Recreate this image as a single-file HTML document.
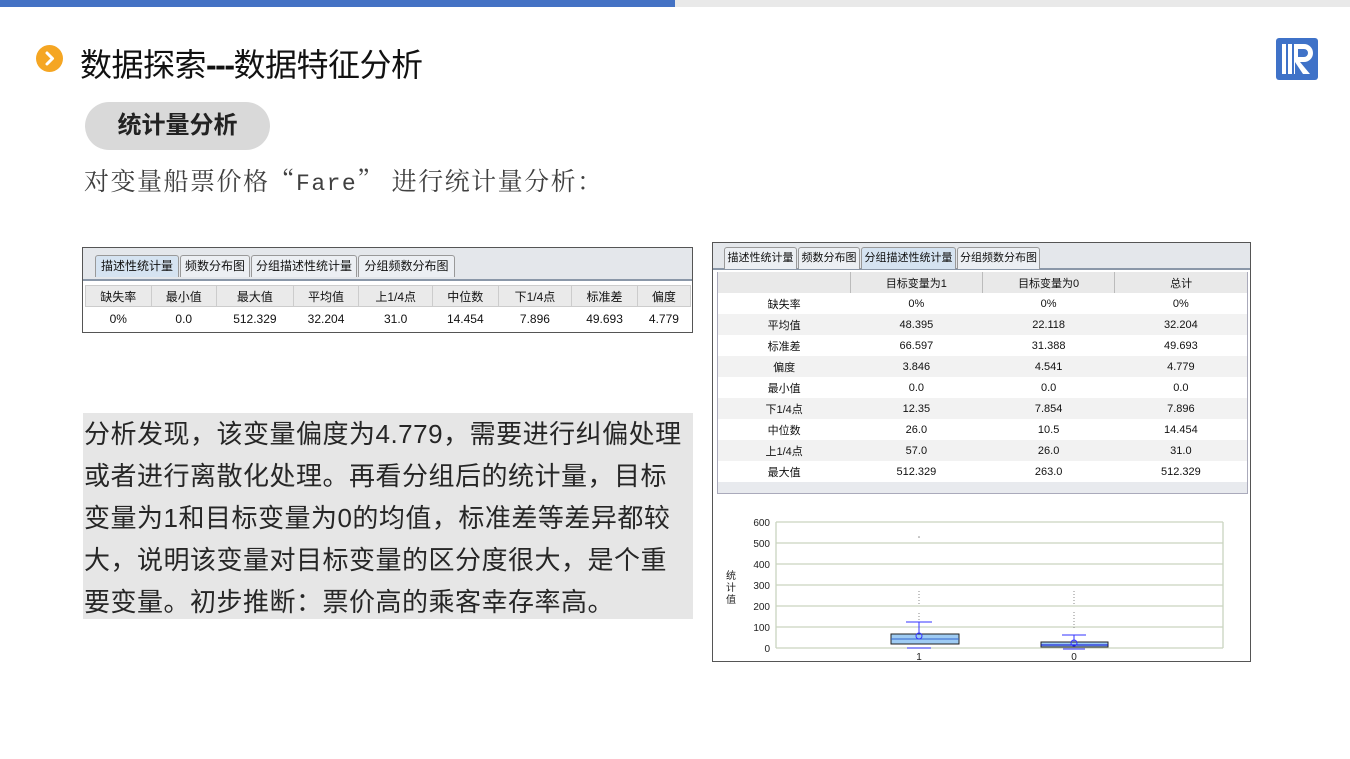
<!DOCTYPE html>
<html><head><meta charset="utf-8"><style>
*{margin:0;padding:0;box-sizing:border-box}
body{width:1350px;height:759px;background:#fff;position:relative;overflow:hidden;font-family:"Liberation Sans","Noto Sans CJK SC",sans-serif}
.abs{position:absolute}
table{border-collapse:collapse}
.t1 td{font-size:12px;text-align:center;color:#111}
.t2{table-layout:fixed}
.t2 td{font-size:11px;text-align:center;color:#111;height:21px}
.tab{position:absolute;top:0;height:22px;border:1px solid #999;border-bottom:none;border-radius:3px 3px 0 0;background:#eceff3;font-size:12px;line-height:20px;text-align:center;color:#111}
</style></head><body>
<div class="abs" style="left:0;top:0;width:675px;height:7px;background:#4472c4"></div>
<div class="abs" style="left:675px;top:0;width:675px;height:7px;background:#e9e9e9"></div>
<div class="abs" style="left:36px;top:45px;width:27px;height:27px;border-radius:50%;background:#f5a623"></div>
<svg class="abs" style="left:36px;top:45px" width="27" height="27"><path d="M11 8 L16.5 13.5 L11 19" stroke="#fff" stroke-width="3" fill="none" stroke-linecap="round" stroke-linejoin="round"/></svg>
<div class="abs" style="left:80px;top:40px;font-size:32px;color:#111;letter-spacing:-0.5px;white-space:nowrap">数据探索<span style="letter-spacing:-1.5px;font-weight:bold">---</span>数据特征分析</div>
<svg class="abs" style="left:1276px;top:38px" width="42" height="42"><rect width="42" height="42" rx="3" fill="#3f72c8"/><rect x="6" y="6" width="4" height="30" fill="#fff"/><rect x="12" y="6" width="4" height="30" fill="#fff"/><path d="M18 6 H28 A9 9 0 0 1 28 24 H24 L34 36 H27 L19 24 V36 H18 Z M22 11 V19 H28 A4 4 0 0 0 28 11 Z" fill="#fff"/></svg>
<div class="abs" style="left:85px;top:102px;width:185px;height:48px;border-radius:24px;background:#d9d9d9;font-size:24px;font-weight:bold;line-height:48px;text-align:center;color:#222">统计量分析</div>
<div class="abs" style="left:84px;top:162px;font-size:25px;color:#404040;font-family:'Noto Serif CJK SC',serif;white-space:nowrap;letter-spacing:1.5px">对变量船票价格“<span style="font-family:'Liberation Mono',monospace;font-size:23px">Fare</span>” 进行统计量分析：</div>

<div class="abs" style="left:82px;top:247px;width:611px;height:86px;border:1px solid #555;background:#fff">
 <div class="abs" style="left:0;top:0;width:609px;height:33px;background:#e4e7eb;border-bottom:2px solid #8a97a8"></div>
 <div class="tab" style="left:12px;top:7px;width:84px;background:#d5e3f1">描述性统计量</div>
 <div class="tab" style="left:97px;top:7px;width:70px">频数分布图</div>
 <div class="tab" style="left:168px;top:7px;width:106px">分组描述性统计量</div>
 <div class="tab" style="left:275px;top:7px;width:97px">分组频数分布图</div>
 <table class="t1 abs" style="left:2px;top:37px;width:606px">
 <tr style="height:21px;background:#eaeaea">
 <td style="border:1px solid #ccc">缺失率</td><td style="border:1px solid #ccc">最小值</td><td style="border:1px solid #ccc">最大值</td><td style="border:1px solid #ccc">平均值</td><td style="border:1px solid #ccc">上1/4点</td><td style="border:1px solid #ccc">中位数</td><td style="border:1px solid #ccc">下1/4点</td><td style="border:1px solid #ccc">标准差</td><td style="border:1px solid #ccc">偏度</td></tr>
 <tr style="height:24px"><td>0%</td><td>0.0</td><td>512.329</td><td>32.204</td><td>31.0</td><td>14.454</td><td>7.896</td><td>49.693</td><td>4.779</td></tr>
 </table>
</div>

<div class="abs" style="left:83px;top:413px;width:610px;height:206px;background:#e6e6e6;padding:0 0 0 1px;font-size:26px;line-height:42px;color:#262626;white-space:nowrap;letter-spacing:0.5px">分析发现，该变量偏度为4.779，需要进行纠偏处理<br>或者进行离散化处理。再看分组后的统计量，目标<br>变量为1和目标变量为0的均值，标准差等差异都较<br>大，说明该变量对目标变量的区分度很大，是个重<br>要变量。初步推断：票价高的乘客幸存率高。</div>

<div class="abs" style="left:712px;top:242px;width:539px;height:420px;border:1px solid #555;background:#fff">
 <div class="abs" style="left:0;top:0;width:537px;height:27px;background:#e4e7eb;border-bottom:2px solid #8a97a8"></div>
 <div class="tab" style="left:11px;top:4px;width:73px;font-size:11px">描述性统计量</div>
 <div class="tab" style="left:85px;top:4px;width:62px;font-size:11px">频数分布图</div>
 <div class="tab" style="left:148px;top:4px;width:95px;font-size:11px;background:#d5e3f1">分组描述性统计量</div>
 <div class="tab" style="left:244px;top:4px;width:83px;font-size:11px">分组频数分布图</div>
 <div class="abs" style="left:4px;top:29px;width:531px;height:222px;border:1px solid #aab;background:#e8eaee"></div>
 <table class="t2 abs" style="left:5px;top:29px;width:529px">
 <tr style="background:#e9e9e9"><td style="border-right:1px solid #bbb"></td><td style="border-right:1px solid #bbb">目标变量为1</td><td style="border-right:1px solid #bbb">目标变量为0</td><td>总计</td></tr>
 <tr style="background:#fff"><td>缺失率</td><td>0%</td><td>0%</td><td>0%</td></tr>
 <tr style="background:#f2f2f2"><td>平均值</td><td>48.395</td><td>22.118</td><td>32.204</td></tr>
 <tr style="background:#fff"><td>标准差</td><td>66.597</td><td>31.388</td><td>49.693</td></tr>
 <tr style="background:#f2f2f2"><td>偏度</td><td>3.846</td><td>4.541</td><td>4.779</td></tr>
 <tr style="background:#fff"><td>最小值</td><td>0.0</td><td>0.0</td><td>0.0</td></tr>
 <tr style="background:#f2f2f2"><td>下1/4点</td><td>12.35</td><td>7.854</td><td>7.896</td></tr>
 <tr style="background:#fff"><td>中位数</td><td>26.0</td><td>10.5</td><td>14.454</td></tr>
 <tr style="background:#f2f2f2"><td>上1/4点</td><td>57.0</td><td>26.0</td><td>31.0</td></tr>
 <tr style="background:#fff"><td>最大值</td><td>512.329</td><td>263.0</td><td>512.329</td></tr>
 </table>
 <svg class="abs" style="left:0;top:255px" width="537" height="163" font-family="Liberation Sans" font-size="10" fill="#222">
  <g stroke="#c9d4bf" stroke-width="1.3">
   <line x1="63" y1="24" x2="510" y2="24"/><line x1="63" y1="45" x2="510" y2="45"/><line x1="63" y1="66" x2="510" y2="66"/><line x1="63" y1="87" x2="510" y2="87"/><line x1="63" y1="108" x2="510" y2="108"/><line x1="63" y1="129" x2="510" y2="129"/><line x1="63" y1="150" x2="510" y2="150"/>
   <line x1="63" y1="24" x2="63" y2="150"/><line x1="510" y1="24" x2="510" y2="150"/>
  </g>
  <g text-anchor="end"><text x="57" y="28">600</text><text x="57" y="49">500</text><text x="57" y="70">400</text><text x="57" y="91">300</text><text x="57" y="112">200</text><text x="57" y="133">100</text><text x="57" y="154">0</text></g>
  <text x="13" y="81" font-family="Noto Sans CJK SC">统</text><text x="13" y="93" font-family="Noto Sans CJK SC">计</text><text x="13" y="105" font-family="Noto Sans CJK SC">值</text>
  <g stroke="#888" stroke-dasharray="1,2"><line x1="206" y1="93" x2="206" y2="108"/><line x1="206" y1="115" x2="206" y2="123"/><line x1="361" y1="93" x2="361" y2="108"/><line x1="361" y1="114" x2="361" y2="130"/></g>
  <circle cx="206" cy="39" r="0.8" fill="#888"/>
  <rect x="178" y="136" width="68" height="10" fill="#9ecbf3" stroke="#222"/><line x1="178" y1="141" x2="246" y2="141" stroke="#36c"/>
  <g stroke="#33f" fill="none"><line x1="193" y1="124" x2="219" y2="124"/><line x1="206" y1="124" x2="206" y2="136"/><line x1="194" y1="150" x2="218" y2="150"/><circle cx="206" cy="138" r="3"/></g>
  <rect x="328" y="144" width="67" height="5" fill="#9ecbf3" stroke="#222"/><line x1="328" y1="147" x2="395" y2="147" stroke="#00c"/>
  <g stroke="#33f" fill="none"><line x1="349" y1="137" x2="373" y2="137"/><line x1="361" y1="137" x2="361" y2="144"/><line x1="350" y1="151" x2="372" y2="151"/><circle cx="361" cy="145" r="3"/></g>
  <text x="206" y="162" text-anchor="middle">1</text><text x="361" y="162" text-anchor="middle">0</text>
 </svg>
</div>
</body></html>
